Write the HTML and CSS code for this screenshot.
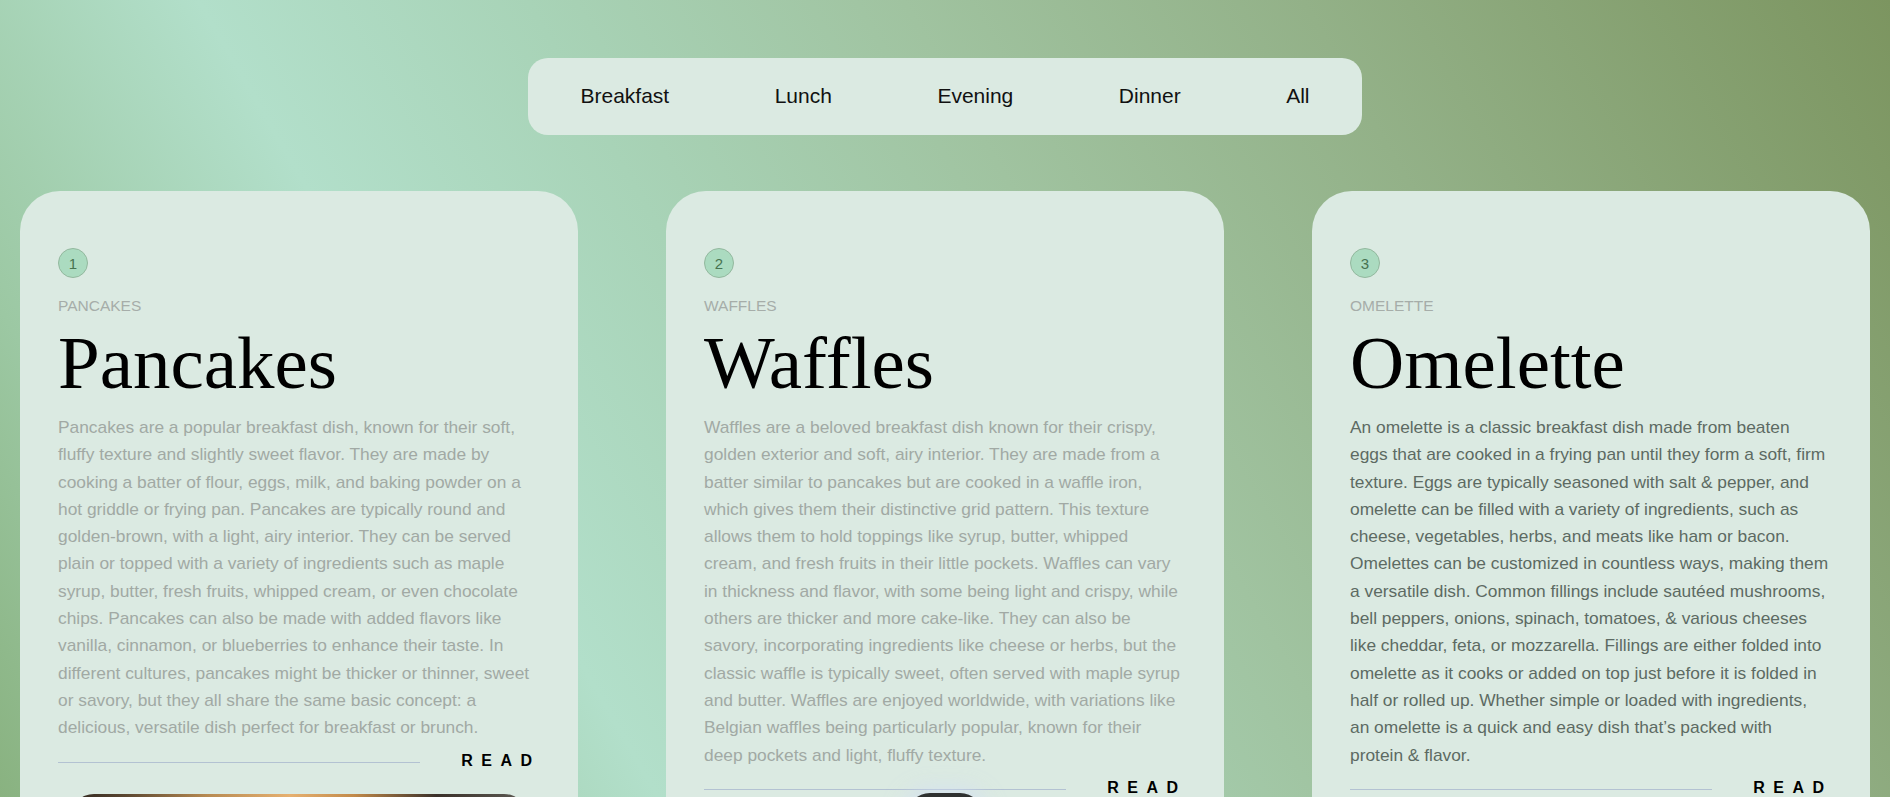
FILE: index.html
```html
<!DOCTYPE html>
<html lang="en">
<head>
<meta charset="utf-8">
<title>Breakfast</title>
<link rel="stylesheet" href="styles.css">
</head>
<body>
<div class="page">
  <nav class="menu">
    <a class="menu-item">Breakfast</a>
    <a class="menu-item">Lunch</a>
    <a class="menu-item">Evening</a>
    <a class="menu-item">Dinner</a>
    <a class="menu-item">All</a>
  </nav>

  <section class="cards">
    <article class="card">
      <div class="badge">1</div>
      <div class="kicker">PANCAKES</div>
      <h2 class="title">Pancakes</h2>
      <p class="desc">Pancakes are a popular breakfast dish, known for their soft,<br>
fluffy texture and slightly sweet flavor. They are made by<br>
cooking a batter of flour, eggs, milk, and baking powder on a<br>
hot griddle or frying pan. Pancakes are typically round and<br>
golden-brown, with a light, airy interior. They can be served<br>
plain or topped with a variety of ingredients such as maple<br>
syrup, butter, fresh fruits, whipped cream, or even chocolate<br>
chips. Pancakes can also be made with added flavors like<br>
vanilla, cinnamon, or blueberries to enhance their taste. In<br>
different cultures, pancakes might be thicker or thinner, sweet<br>
or savory, but they all share the same basic concept: a<br>
delicious, versatile dish perfect for breakfast or brunch.</p>
      <div class="card-foot"><span class="rule"></span><span class="read">READ</span></div>
      <div class="photo photo-pancakes"></div>
    </article>

    <article class="card">
      <div class="badge">2</div>
      <div class="kicker">WAFFLES</div>
      <h2 class="title">Waffles</h2>
      <p class="desc">Waffles are a beloved breakfast dish known for their crispy,<br>
golden exterior and soft, airy interior. They are made from a<br>
batter similar to pancakes but are cooked in a waffle iron,<br>
which gives them their distinctive grid pattern. This texture<br>
allows them to hold toppings like syrup, butter, whipped<br>
cream, and fresh fruits in their little pockets. Waffles can vary<br>
in thickness and flavor, with some being light and crispy, while<br>
others are thicker and more cake-like. They can also be<br>
savory, incorporating ingredients like cheese or herbs, but the<br>
classic waffle is typically sweet, often served with maple syrup<br>
and butter. Waffles are enjoyed worldwide, with variations like<br>
Belgian waffles being particularly popular, known for their<br>
deep pockets and light, fluffy texture.</p>
      <div class="card-foot"><span class="rule"></span><span class="read">READ</span></div>
      <div class="photo photo-waffles"></div>
    </article>

    <article class="card card-active">
      <div class="badge">3</div>
      <div class="kicker">OMELETTE</div>
      <h2 class="title">Omelette</h2>
      <p class="desc">An omelette is a classic breakfast dish made from beaten<br>
eggs that are cooked in a frying pan until they form a soft, firm<br>
texture. Eggs are typically seasoned with salt &amp; pepper, and<br>
omelette can be filled with a variety of ingredients, such as<br>
cheese, vegetables, herbs, and meats like ham or bacon.<br>
Omelettes can be customized in countless ways, making them<br>
a versatile dish. Common fillings include sautéed mushrooms,<br>
bell peppers, onions, spinach, tomatoes, &amp; various cheeses<br>
like cheddar, feta, or mozzarella. Fillings are either folded into<br>
omelette as it cooks or added on top just before it is folded in<br>
half or rolled up. Whether simple or loaded with ingredients,<br>
an omelette is a quick and easy dish that’s packed with<br>
protein &amp; flavor.</p>
      <div class="card-foot"><span class="rule"></span><span class="read">READ</span></div>
      <div class="photo photo-omelette"></div>
    </article>
  </section>

  <div class="floating-pill"></div>
</div>
</body>
</html>
```

FILE: styles.css
```css
html, body {
  margin: 0;
  padding: 0;
  height: 100%;
  overflow: hidden;
}

body {
  font-family: "Liberation Sans", Arial, sans-serif;
  background: linear-gradient(60deg, #89b280 0%, #9cc8a3 12%, #b2dfca 28%, #a8d3b7 42%, #a0c3a0 58%, #93b188 75%, #7c9560 100%);
  background-attachment: fixed;
}

.page {
  min-height: 100vh;
  padding-top: 58px;
  box-sizing: border-box;
}

.menu {
  display: flex;
  width: max-content;
  margin: 0 auto;
  height: 77px;
  box-sizing: border-box;
  padding-bottom: 2px;
  align-items: center;
  background: #dbeae2;
  border-radius: 20px;
}

.menu-item {
  padding: 0 52.75px;
  font-size: 21px;
  line-height: 24px;
  color: #111;
  cursor: pointer;
}

.cards {
  display: grid;
  grid-template-columns: repeat(3, 1fr);
  column-gap: 88px;
  padding: 0 20px;
  margin-top: 56px;
  align-items: start;
}

.card {
  background: #dbeae2;
  border-radius: 40px;
  padding: 57px 38px 0;
  display: flex;
  flex-direction: column;
}

.badge {
  width: 28px;
  height: 28px;
  border: 1px solid #93b89e;
  border-radius: 50%;
  background: #abdbc0;
  color: #477350;
  font-size: 15px;
  display: flex;
  align-items: center;
  justify-content: center;
}

.kicker {
  margin-top: 19px;
  font-size: 15.5px;
  line-height: 17px;
  color: #a6ada9;
}

.title {
  margin: 6px 0 0;
  font-family: "Liberation Serif", "Times New Roman", serif;
  font-weight: normal;
  font-size: 75px;
  line-height: 86px;
  color: #000;
}

.desc {
  margin: 8px 0 0;
  font-size: 17.35px;
  line-height: 27.3px;
  color: #a1a9a4;
}

.card-active .desc {
  color: #5d6a63;
}

.card-foot {
  display: flex;
  align-items: center;
  justify-content: space-between;
  margin-top: 10px;
  height: 18px;
}

.rule {
  width: 362px;
  height: 1px;
  background: #b3c2d2;
  margin-top: 3px;
}

.read {
  font-size: 16px;
  font-weight: bold;
  letter-spacing: 8.5px;
  margin-right: -0.5px;
  color: #000;
}

.photo {
  width: 95%;
  height: 300px;
  margin: 24px auto 40px;
  border-radius: 24px 24px 0 0;
}

.photo-pancakes {
  background: linear-gradient(90deg, #2d2620 0%, #5a4630 12%, #b78a52 30%, #e6b070 48%, #c28a4a 62%, #3a3029 80%, #5e5c55 100%);
}

.photo-waffles {
  background: linear-gradient(90deg, #6b4a2a 0%, #c08850 50%, #6b4a2a 100%);
}

.photo-omelette {
  background: linear-gradient(90deg, #d9b95a 0%, #f0d68a 50%, #c9a24a 100%);
}

.floating-pill {
  position: fixed;
  left: 50%;
  bottom: -42px;
  transform: translateX(-50%);
  width: 76px;
  height: 46px;
  border-radius: 23px;
  background: #2f3130;
  box-shadow: 0 0 18px 6px rgba(210, 220, 245, 0.55);
}
```
